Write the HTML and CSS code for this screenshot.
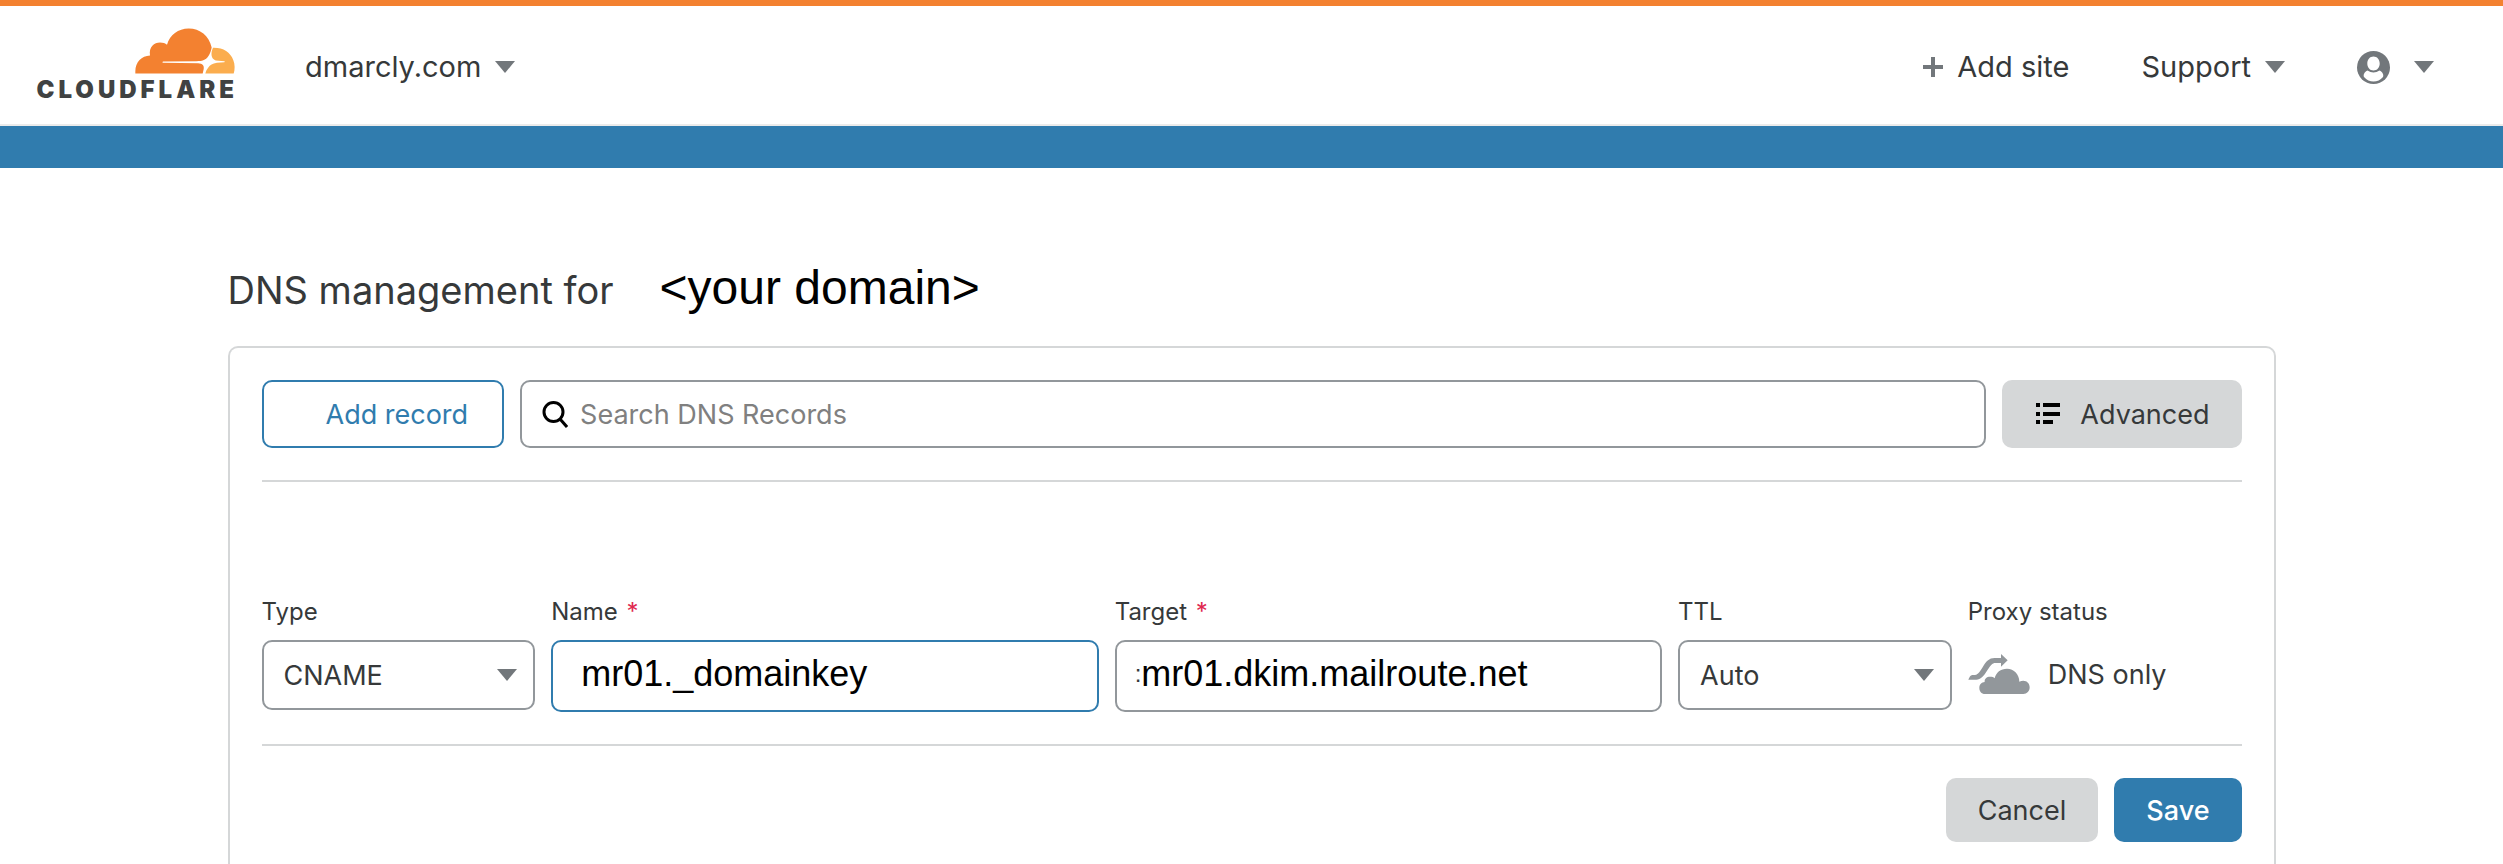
FILE: index.html
```html
<!DOCTYPE html>
<html lang="en">
<head>
<meta charset="utf-8">
<title>DNS management</title>
<link rel="stylesheet" href="styles.css">
</head>
<body>
<header class="topbar">
  <a class="logo" href="#" aria-label="Cloudflare home">
    <svg class="logo-cloud" viewBox="346 26 300 137" aria-hidden="true">
      <path fill="#f38130" d="M347 162V155C347 128 366 109 391 108C387 82 404 69 421 69C430 69 437 71 442 76C450 46 476 27 507 27C541 27 568 49 576 84C573 100 566 116 554 121C548 125 540 125 530 125L430 126Q426 128 430 130L535 131C549 132 554 138 552 149L549 162Z"/>
      <path fill="#fbad4e" d="M580 85C573 100 573 118 588 123L614 125.500Q617 127 614 128.500L592 130C578 132 571 137 566 144C560 151 559 156 557 162H642C646 150 646 135 641 122C632 98 610 84 580 85Z"/>
    </svg>
    <span class="wordmark">CLOUDFLARE</span>
  </a>
  <button class="nav-item site-menu" type="button">dmarcly.com
    <svg class="caret" viewBox="0 0 20 12" aria-hidden="true"><path d="M0 0H20L10 12Z"/></svg>
  </button>
  <nav class="actions" aria-label="Account">
    <a class="nav-item" href="#">
      <svg class="plus" viewBox="0 0 20 20" aria-hidden="true"><path d="M8 0H12V8H20V12H12V20H8V12H0V8H8Z"/></svg>
      Add site</a>
    <button class="nav-item" type="button">Support
      <svg class="caret" viewBox="0 0 20 12" aria-hidden="true"><path d="M0 0H20L10 12Z"/></svg>
    </button>
    <button class="nav-item account" type="button" aria-label="Account menu">
      <svg class="user" viewBox="0 0 33 33" aria-hidden="true">
        <circle cx="16.500" cy="16.500" r="16.500"/>
        <path fill="#fff" d="M16.500 5.500C20 5.500 22.700 8.300 22.700 12.500C22.700 16.700 20 19.500 16.500 19.500S10.300 16.700 10.300 12.500C10.300 8.300 13 5.500 16.500 5.500ZM10.500 19.500Q16.500 23.500 22.500 19.500C25.500 20.500 27 24 26 26Q22 30.500 16.500 30.500T7 26C6 24 7.500 20.500 10.500 19.500Z"/>
      </svg>
      <svg class="caret" viewBox="0 0 20 12" aria-hidden="true"><path d="M0 0H20L10 12Z"/></svg>
    </button>
  </nav>
</header>
<div class="band"></div>
<main class="page">
  <h1 class="title">DNS management for <span class="domain">&lt;your domain&gt;</span></h1>
  <section class="panel">
    <div class="toolbar">
      <button class="btn btn-outline" type="button">Add record</button>
      <label class="search">
        <svg class="search-icon" viewBox="0 0 26 28" aria-hidden="true"><circle cx="11.500" cy="12" r="9.500"/><path d="M18 19L25 27"/></svg>
        <input class="search-input" type="search" placeholder="Search DNS Records" aria-label="Search DNS Records">
      </label>
      <button class="btn btn-gray btn-advanced" type="button">
        <svg class="list-icon" viewBox="0 0 24 22" aria-hidden="true"><path d="M0 0H4V4H0ZM7 0H24V4H7ZM0 9H4V13H0ZM7 9H24V13H7ZM0 17H4V21H0ZM7 17H17V21H7Z"/></svg>
        Advanced</button>
    </div>
    <form class="record">
      <div class="fields">
        <div class="field">
          <label class="label" for="type">Type</label>
          <div class="select-wrap">
            <select class="select" id="type"><option>CNAME</option></select>
            <svg class="caret caret-select" viewBox="0 0 20 12" aria-hidden="true"><path d="M0 0H20L10 12Z"/></svg>
          </div>
        </div>
        <div class="field">
          <label class="label" for="name">Name <span class="required">*</span></label>
          <div class="box box-active"><input class="box-input" id="name" type="text" value="mr01._domainkey"></div>
        </div>
        <div class="field">
          <label class="label" for="target">Target <span class="required">*</span></label>
          <div class="box box-target"><span class="prefix" aria-hidden="true">:</span><input class="box-input" id="target" type="text" value="mr01.dkim.mailroute.net"></div>
        </div>
        <div class="field">
          <label class="label" for="ttl">TTL</label>
          <div class="select-wrap">
            <select class="select" id="ttl"><option>Auto</option></select>
            <svg class="caret caret-select" viewBox="0 0 20 12" aria-hidden="true"><path d="M0 0H20L10 12Z"/></svg>
          </div>
        </div>
        <div class="field">
          <span class="label">Proxy status</span>
          <div class="proxy">
            <svg class="proxy-icon" viewBox="53 42 184 120" aria-hidden="true">
              <path d="M53 119C58 108 60 105 68 105C82 105 85 98 95 83C106 64 115 54 132 54H151V42L171 61L151 80V69H135C124 69 119 77 110 91C98 110 90 119 77 119Z"/>
              <path d="M103 162C92 162 86 154 86 144C86 133 93 127 102 126C101 116 108 110 118 110C124 110 129 111 132 115C136 97 150 86 169 86C190 86 206 103 206 125C223 117 237 127 237 142C237 154 229 162 218 162Z"/>
            </svg>
            DNS only
          </div>
        </div>
      </div>
      <div class="buttons">
        <button class="btn btn-gray btn-short" type="button">Cancel</button>
        <button class="btn btn-primary btn-short" type="submit">Save</button>
      </div>
    </form>
  </section>
</main>
</body>
</html>
```

FILE: styles.css
```css
* { box-sizing: border-box; }

body {
  display: flex;
  flex-direction: column;
  min-height: 100vh;
  margin: 0;
  background: #fff;
  color: #36393a;
  font-family: Inter, Roboto, sans-serif;
  font-size: 27px;
}

button, input, select {
  margin: 0;
  padding: 0;
  border: 0;
  background: none;
  color: inherit;
  font: inherit;
}

svg { display: block; flex: none; }

.topbar {
  display: flex;
  align-items: center;
  height: 126px;
  padding: 4px 69px 0 31px;
  border-top: 6px solid #f38130;
  border-bottom: 2px solid #ebebeb;
}

.logo {
  display: flex;
  flex-direction: column;
  align-items: flex-end;
  width: 204px;
  color: #404242;
  text-decoration: none;
}
.logo-cloud { width: 100px; height: 46px; }
.wordmark {
  font-size: 24px;
  font-weight: 900;
  line-height: 32px;
  letter-spacing: 4px;
  margin-right: -3px;
}

.nav-item {
  display: flex;
  align-items: center;
  gap: 14px;
  color: #36393a;
  font-size: 29px;
  line-height: 40px;
  text-decoration: none;
}
.site-menu { margin-left: 70px; }
.actions { display: flex; gap: 72px; margin-left: auto; }
.account { gap: 24px; }
.caret { width: 20px; height: 12px; fill: #72777b; }
.plus { width: 20px; height: 20px; fill: #72777b; }
.user { width: 33px; height: 33px; fill: #72777b; }

.band { height: 42px; background: #307cae; }

.page {
  display: flex;
  flex: 1;
  flex-direction: column;
  width: 100%;
  max-width: 2048px;
  margin: 0 auto;
  padding-top: 84px;
}

.title {
  display: flex;
  align-items: baseline;
  gap: 46px;
  margin: 0 0 20px;
  font-size: 38px;
  font-weight: 400;
  line-height: 72px;
}
.domain {
  color: #000;
  font-family: "Liberation Sans", Arial, sans-serif;
  font-size: 48px;
}

.panel {
  flex: 1;
  padding: 32px 32px 22px;
  border: 2px solid #d5d7d8;
  border-bottom: 0;
  border-radius: 10px 10px 0 0;
}

.toolbar {
  display: flex;
  gap: 16px;
  padding-bottom: 32px;
  border-bottom: 2px solid #d5d7d8;
}

.btn {
  height: 68px;
  padding: 0 32px;
  border-radius: 10px;
  white-space: nowrap;
}
.btn-outline {
  padding: 0 34px 0 62px;
  border: 2px solid #307cae;
  color: #307cae;
}
.btn-gray { background: #d5d7d8; }
.btn-primary { background: #307cae; color: #fff; font-weight: 500; }
.btn-advanced { display: flex; align-items: center; gap: 20px; padding: 0 32px 0 34px; }
.btn-short { height: 64px; }
.list-icon { width: 24px; height: 22px; fill: #000; }

.search {
  display: flex;
  flex: 1;
  align-items: center;
  gap: 12px;
  height: 68px;
  padding: 0 20px;
  border: 2px solid #92979b;
  border-radius: 10px;
}
.search-icon { width: 26px; height: 28px; fill: none; stroke: #000; stroke-width: 3; }
.search-input { flex: 1; min-width: 0; outline: 0; appearance: none; }
.search-input::placeholder { color: #808080; opacity: 1; }

.fields {
  display: grid;
  grid-template-columns: 1fr 2fr 2fr 1fr 1fr;
  gap: 16px;
  padding: 112px 0 32px;
  border-bottom: 2px solid #d5d7d8;
}
.field { min-width: 0; }
.label {
  display: block;
  margin-bottom: 10px;
  font-size: 24px;
  line-height: 36px;
}
.required { margin-left: 2px; color: #e0284f; }

.select-wrap { display: grid; align-items: center; }
.select {
  grid-area: 1 / 1;
  width: 100%;
  height: 70px;
  padding: 0 60px 0 20px;
  border: 2px solid #92979b;
  border-radius: 10px;
  appearance: none;
}
.caret-select {
  grid-area: 1 / 1;
  justify-self: end;
  margin-right: 18px;
  pointer-events: none;
}

.box {
  display: flex;
  align-items: center;
  height: 72px;
  padding: 0 20px 4px 28px;
  border: 2px solid #92979b;
  border-radius: 10px;
}
.box-active { border-color: #307cae; }
.box-target { padding-left: 18px; }
.box-input {
  flex: 1;
  min-width: 0;
  color: #000;
  font-family: "Liberation Sans", Arial, sans-serif;
  font-size: 36px;
  line-height: 44px;
  outline: 0;
}
.prefix {
  font-family: "Liberation Sans", Arial, sans-serif;
  font-size: 24px;
  line-height: 44px;
}

.proxy {
  display: flex;
  align-items: center;
  gap: 18px;
  height: 68px;
  white-space: nowrap;
}
.proxy-icon { width: 62px; height: 40px; fill: #92979b; }

.buttons {
  display: flex;
  justify-content: flex-end;
  gap: 16px;
  padding-top: 32px;
}
```
